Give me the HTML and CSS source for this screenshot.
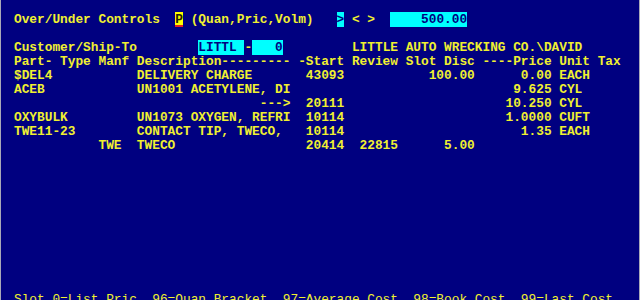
FILE: index.html
```html
<!DOCTYPE html>
<html lang="en">
  <head>
    <meta charset="UTF-8" />
    <meta name="viewport" content="width=device-width, initial-scale=1.0" />
    <title>Over/Under Controls</title>
    <link rel="stylesheet" href="styles.css">
  </head>
  <body>
    <div class="screen">
      <div class="line">Over/Under Controls  <span class="cursor">P</span> (Quan,Pric,Volm)   <span class="field">&gt;</span> &lt; &gt;  <span class="field">    500.00</span></div>
      <div class="line"></div>
      <div class="line">Customer/Ship-To        <span class="field">LITTL </span>-<span class="field">   0</span>         LITTLE AUTO WRECKING CO.\DAVID</div>
      <div class="line">Part- Type Manf Description--------- -Start Review Slot Disc ----Price Unit Tax</div>
      <div class="line">$DEL4           DELIVERY CHARGE       43093           100.00      0.00 EACH</div>
      <div class="line">ACEB            UN1001 ACETYLENE, DI                             9.625 CYL</div>
      <div class="line">                                ---&gt;  20111                     10.250 CYL</div>
      <div class="line">OXYBULK         UN1073 OXYGEN, REFRI  10114                     1.0000 CUFT</div>
      <div class="line">TWE11-23        CONTACT TIP, TWECO,   10114                       1.35 EACH</div>
      <div class="line">           TWE  TWECO                 20414  22815      5.00</div>
      <div class="line"></div>
      <div class="line"></div>
      <div class="line"></div>
      <div class="line"></div>
      <div class="line"></div>
      <div class="line"></div>
      <div class="line"></div>
      <div class="line"></div>
      <div class="line"></div>
      <div class="line"></div>
      <div class="line footer">Slot 0=List Pric  96=Quan Bracket  97=Average Cost  98=Book Cost  99=Last Cost</div>
    </div>
  </body>
</html>
```

FILE: styles.css
```css
body {
  margin: 0;
  background: #000080;
  overflow: hidden;
}
.screen {
  height: 300px;
  box-sizing: border-box;
  padding: 13px 0 0 13px;
  border-left: 1px solid #a8a8b8;
  border-right: 1px solid #a8a8b8;
  background: #000080;
  color: #f0f030;
  font-family: "Liberation Mono", "Courier New", monospace;
  font-size: 12.8px;
  font-weight: bold;
  overflow: hidden;
}
.line {
  height: 14px;
  line-height: 14px;
  white-space: pre;
}
.field {
  background: #00ffff;
  color: #000080;
}
.cursor {
  background: #ffff00;
  color: #202000;
  box-shadow: inset 0 -2px #e02020;
}
.footer {
  font-weight: normal;
}
```
